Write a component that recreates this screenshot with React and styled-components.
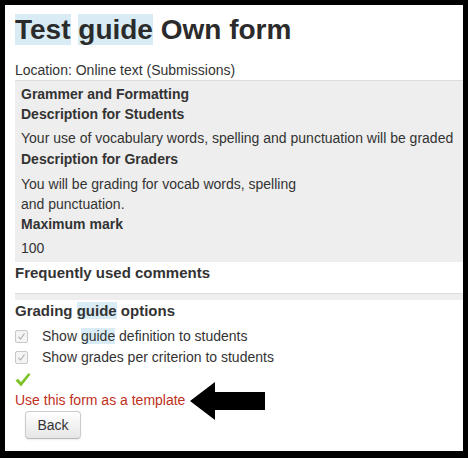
import styled, { createGlobalStyle } from 'styled-components'

const GlobalStyle = createGlobalStyle`
  body {
    margin: 0;
    background: #fff;
    font-family: "Liberation Sans", Arial, sans-serif;
    color: #333;
  }
`

const Frame = styled.div`
  position: relative;
  box-sizing: border-box;
  width: 468px;
  height: 458px;
  border: 5px solid #000;
  border-bottom-width: 7px;
  padding-left: 10px;
  background: #fff;
  overflow: hidden;
`

const Title = styled.h2`
  margin: 9px 0 0;
  font-size: 28px;
  line-height: 32px;
  font-weight: bold;
  color: #2b2b2b;
`

const Mark = styled.span`
  background: #d9ecf6;
`

const Location = styled.div`
  margin-top: 14px;
  font-size: 14px;
  line-height: 20px;
`

const Panel = styled.div`
  background: #eee;
  border-top: 1px solid #ddd;
  padding: 3px 0 3px 6px;
`

const Label = styled.div`
  font-size: 14px;
  font-weight: bold;
  line-height: 20px;
`

const Text = styled.div`
  margin: ${(p) => (p.$tight ? '5px 0 0' : '4px 0 1px')};
  font-size: 14px;
  line-height: 20px;
`

const Heading = styled.div`
  margin-top: 1px;
  font-size: 15px;
  font-weight: bold;
  line-height: 20px;
`

const Strip = styled.div`
  margin-top: 10px;
  height: 6px;
  background: #eee;
  border-top: 1px solid #ddd;
`

const Options = styled.div`
  margin-top: 5px;
  display: flex;
  flex-direction: column;
  gap: 1px;
`

const Option = styled.label`
  display: flex;
  align-items: center;
  gap: 14px;
  font-size: 14px;
  line-height: 20px;
`

const Box = styled.span`
  box-sizing: border-box;
  width: 13px;
  height: 13px;
  border: 1px solid #c8c8c8;
  border-radius: 2px;
  background: #f4f4f4;
  display: flex;
  align-items: center;
  justify-content: center;
`

const Done = styled.div`
  margin-top: 5px;
  height: 17px;
`

const Template = styled.div`
  margin-top: 1px;
  font-size: 14px;
  line-height: 20px;
  color: #c0301c;
`

const Button = styled.button`
  margin: 1px 0 0 10px;
  width: 56px;
  height: 28px;
  padding: 0;
  font-family: inherit;
  font-size: 14px;
  color: #333;
  border: 1px solid #ccc;
  border-bottom-color: #b8b8b8;
  border-radius: 4px;
  background: linear-gradient(#fff, #e6e6e6);
  box-shadow: 0 1px 2px rgba(0, 0, 0, 0.08);
`

const Arrow = styled.svg`
  position: absolute;
  left: 185px;
  top: 377px;
`

const Checkbox = () => (
  <Box>
    <svg width="9" height="9" viewBox="0 0 9 9">
      <path d="M1.5 4.8 L3.5 7 L7.5 1.5" fill="none" stroke="#aaa" strokeWidth="1.1" />
    </svg>
  </Box>
)

const App = () => (
  <>
    <GlobalStyle />
    <Frame>
      <Title>
        <Mark>Test</Mark> <Mark>guide</Mark> Own form
      </Title>
      <Location>Location: Online text (Submissions)</Location>
      <Panel>
        <Label>Grammer and Formatting</Label>
        <Label>Description for Students</Label>
        <Text>Your use of vocabulary words, spelling and punctuation will be graded</Text>
        <Label>Description for Graders</Label>
        <Text $tight>
          You will be grading for vocab words, spelling
          <br />
          and punctuation.
        </Text>
        <Label>Maximum mark</Label>
        <Text>100</Text>
      </Panel>
      <Heading>Frequently used comments</Heading>
      <Strip />
      <Heading>
        Grading <Mark>guide</Mark> options
      </Heading>
      <Options>
        <Option>
          <Checkbox />
          <span>
            Show <Mark>guide</Mark> definition to students
          </span>
        </Option>
        <Option>
          <Checkbox />
          <span>Show grades per criterion to students</span>
        </Option>
      </Options>
      <Done>
        <svg width="16" height="16" viewBox="0 0 16 16">
          <path d="M0.5 8.5 L3 6.8 L6 10 L13.5 1 L15.5 2.6 L6 14.5 Z" fill="#7dc22a" />
        </svg>
      </Done>
      <Template>Use this form as a template</Template>
      <Button>Back</Button>
      <Arrow width="75" height="38" viewBox="0 0 75 38">
        <polygon points="0,19 25,0 25,10 75,10 75,28 25,28 25,38" fill="#000" />
      </Arrow>
    </Frame>
  </>
)

export default App
